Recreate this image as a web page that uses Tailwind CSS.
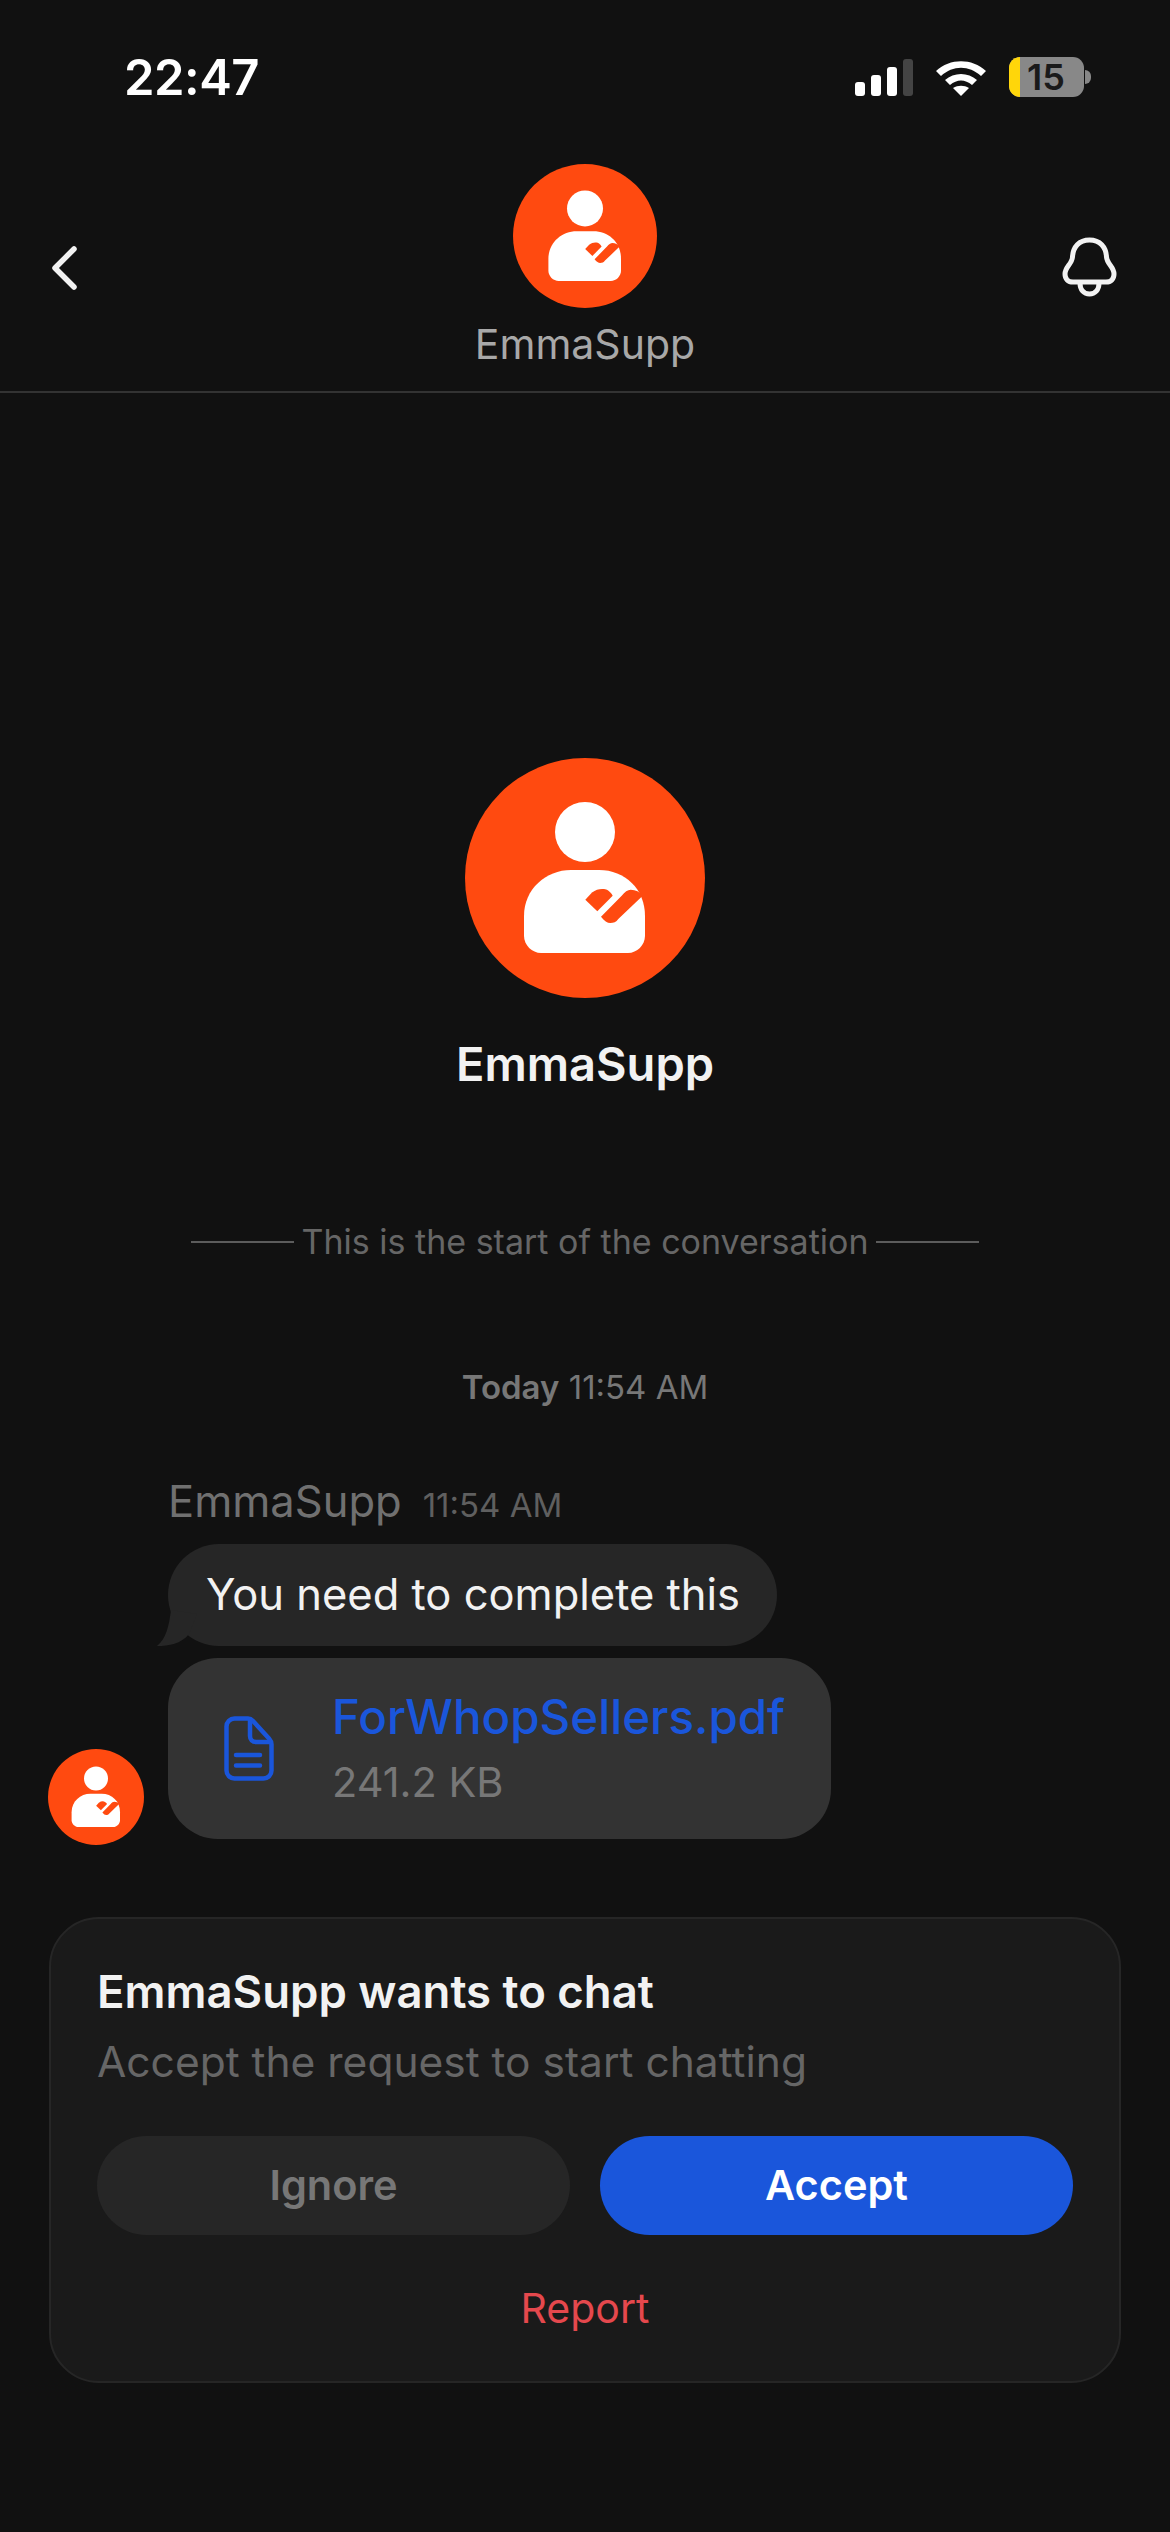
<!DOCTYPE html>
<html lang="en">
<head>
  <meta charset="UTF-8" />
  <title>EmmaSupp</title>
  <meta name="viewport" content="width=device-width, initial-scale=1" />
  <script src="https://cdn.jsdelivr.net/npm/@tailwindcss/browser@4"></script>
</head>
<body class="bg-[#111111] [font-family:Inter,sans-serif] text-white">
  <svg width="0" height="0" class="absolute">
    <symbol id="avatar" viewBox="0 0 240 240">
      <circle cx="120" cy="120" r="120" fill="#ff4a10" />
      <circle cx="120" cy="74" r="30" fill="#fff" />
      <path d="M59 158C59 131 81 112 106 112H134C160 112 180 131 180 158V178C180 187 172 195 163 195H76C67 195 59 187 59 178Z" fill="#fff" />
      <path d="M120.300 141.700 127 134.500c4-3 8-4 12-3.500 3 .5 6 2 8.700 6.700L132.300 153.300z" fill="#ff4a10" />
      <path d="M136 158.700 156.700 137.700c3-4 6-6 9-6 5 0 9 2 12 6L153.300 161c-2 3-5 4-8 4-3 0-6-2-9.300-6.300z" fill="#ff4a10" />
    </symbol>
  </svg>

  <div class="w-[1170px] h-[2532px] overflow-hidden">
    <!-- status bar -->
    <div class="h-[154px] flex items-center justify-between pl-[124px] pr-[79px]">
      <span class="text-[49px] leading-none font-semibold tracking-[-0.5px]">22:47</span>
      <div class="flex items-center gap-[23px]">
        <div class="flex items-end gap-[6px] h-[37px]">
          <div class="w-[10px] h-[14px] rounded-[3px] bg-white"></div>
          <div class="w-[10px] h-[21px] rounded-[3px] bg-white"></div>
          <div class="w-[10px] h-[29px] rounded-[3px] bg-white"></div>
          <div class="w-[10px] h-[37px] rounded-[3px] bg-[#444444]"></div>
        </div>
        <svg width="50" height="37" viewBox="0 0 50 37" fill="none">
          <path d="M0 12C14 -1 36 -1 50 12L45 17C33 6 17 6 5 17Z" fill="#fff" />
          <path d="M9 21C18 13 32 13 41 21L36 26C29 20 21 20 14 26Z" fill="#fff" />
          <path d="M17 29C22 26 28 26 33 29L25 37Z" fill="#fff" />
        </svg>
        <div class="flex items-center gap-[1px]">
          <div class="w-[75px] h-[40px] rounded-[11px] bg-[#888888] flex items-center">
            <div class="w-[11px] h-full rounded-l-[11px] bg-[#ffd60a]"></div>
            <span class="ml-[7px] text-[36px] leading-none font-semibold text-[#1a1a1a]">15</span>
          </div>
          <div class="w-[6px] h-[14px] rounded-r-full bg-[#888888]"></div>
        </div>
      </div>
    </div>

    <!-- header -->
    <div class="h-[239px] border-b-2 border-[#333333] pt-[10px] px-[51px] grid grid-cols-[1fr_auto_1fr]">
      <svg class="mt-[82px]" width="26" height="44" viewBox="0 0 26 44" fill="none">
        <path d="M23 3 4 22 23 41" stroke="#f2f2f2" stroke-width="5.500" stroke-linecap="round" stroke-linejoin="round" />
      </svg>
      <div class="flex flex-col items-center">
        <svg width="144" height="144"><use href="#avatar" /></svg>
        <span class="mt-[13px] text-[41px] leading-[46px] text-[#a8a8a8]">EmmaSupp</span>
      </div>
      <svg class="mt-[73px] mr-[2px] justify-self-end" width="55" height="60" viewBox="0 0 55 60" fill="none" stroke="#f2f2f2" stroke-width="5">
        <path d="M27.500 3C17 3 11 10 10.500 20C10 27 3 30 3 37C3 42 6 45 11 45H44C49 45 52 42 52 37C52 30 45 27 44.500 20C44 10 38 3 27.500 3Z" stroke-linejoin="round" />
        <path d="M18 46C18 53 22 57 27.500 57C33 57 37 53 37 46" />
      </svg>
    </div>

    <!-- conversation start -->
    <div class="flex flex-col items-center pt-[365px]">
      <svg width="240" height="240"><use href="#avatar" /></svg>
      <span class="mt-[38px] text-[47px] leading-[56px] font-semibold text-[#f2f2f2]">EmmaSupp</span>
      <div class="mt-[130px] flex items-center gap-[8px] h-[40px]">
        <div class="w-[103px] h-[2px] bg-[#5c5c5c]"></div>
        <span class="text-[34px] leading-[40px] text-[#666666]">This is the start of the conversation</span>
        <div class="w-[103px] h-[2px] bg-[#5c5c5c]"></div>
      </div>
      <div class="mt-[106px] h-[38px] text-[33px] leading-[38px] text-[#777777]"><span class="font-semibold">Today</span> 11:54 AM</div>
    </div>

    <!-- message group -->
    <div class="mt-[70px] pl-[48px] flex items-end gap-[24px]">
      <svg class="shrink-0 mb-[-6px]" width="96" height="96"><use href="#avatar" /></svg>
      <div class="flex flex-col items-start">
        <div class="flex items-baseline gap-[21px] h-[50px]">
          <span class="text-[43.500px] leading-[50px] text-[#707070]">EmmaSupp</span>
          <span class="text-[33px] leading-[50px] text-[#5f5f5f]">11:54 AM</span>
        </div>
        <div class="relative mt-[18px] h-[102px] rounded-[51px] bg-[#262626] pl-[38px] pr-[37px] flex items-center text-[43.500px] text-[#f2f2f2]">
          <svg class="absolute left-[-11px] bottom-0" width="40" height="40" viewBox="0 0 40 40"><path d="M14 4C12 20 9 33 0 40C12 40 24 38 32 28L40 8Z" fill="#262626" /></svg>
          <span class="relative">You need to complete this</span>
        </div>
        <div class="mt-[12px] h-[181px] rounded-[50px] bg-[#333333] pl-[56px] pr-[46px] flex items-center gap-[58px]">
          <svg class="shrink-0" width="50" height="65" viewBox="0 0 50 65" fill="none" stroke="#1a56db" stroke-width="4.500" stroke-linejoin="round">
            <path d="M10.500 2.500H24C26 2.500 27.500 3.300 29 5L45 22.500C46.800 24.500 47.500 26 47.500 28.500V54.500C47.500 59 44 62.500 39.500 62.500H10.500C6 62.500 2.500 59 2.500 54.500V10.500C2.500 6 6 2.500 10.500 2.500Z" />
            <path d="M26 3V20C26 23.500 28.500 26 32 26H47" />
            <path d="M12 39H36M12 49.500H36" stroke-linecap="round" />
          </svg>
          <div class="flex flex-col mt-[-2px]">
            <span class="text-[47.500px] leading-[52px] font-medium text-[#1a56db]">ForWhopSellers.pdf</span>
            <span class="mt-[16px] text-[41.500px] leading-[46px] text-[#777777]">241.2 KB</span>
          </div>
        </div>
      </div>
    </div>

    <!-- chat request -->
    <div class="mt-[78px] mx-[49px] h-[466px] rounded-[50px] border-2 border-[#262626] bg-[#1a1a1a] px-[46px] pt-[46px]">
      <div class="text-[45.500px] leading-[54px] font-semibold text-[#f2f2f2]">EmmaSupp wants to chat</div>
      <div class="mt-[18px] text-[42.500px] leading-[50px] text-[#666666]">Accept the request to start chatting</div>
      <div class="mt-[49px] flex gap-[30px]">
        <div class="w-[474px] h-[99px] rounded-full bg-[#262626] flex items-center justify-center text-[41.500px] font-semibold text-[#777777]">Ignore</div>
        <div class="w-[474px] h-[99px] rounded-full bg-[#1a56db] flex items-center justify-center text-[41.500px] font-semibold text-white">Accept</div>
      </div>
      <div class="mt-[48px] text-center text-[41px] leading-[50px] text-[#e5484d]">Report</div>
    </div>
  </div>
</body>
</html>
